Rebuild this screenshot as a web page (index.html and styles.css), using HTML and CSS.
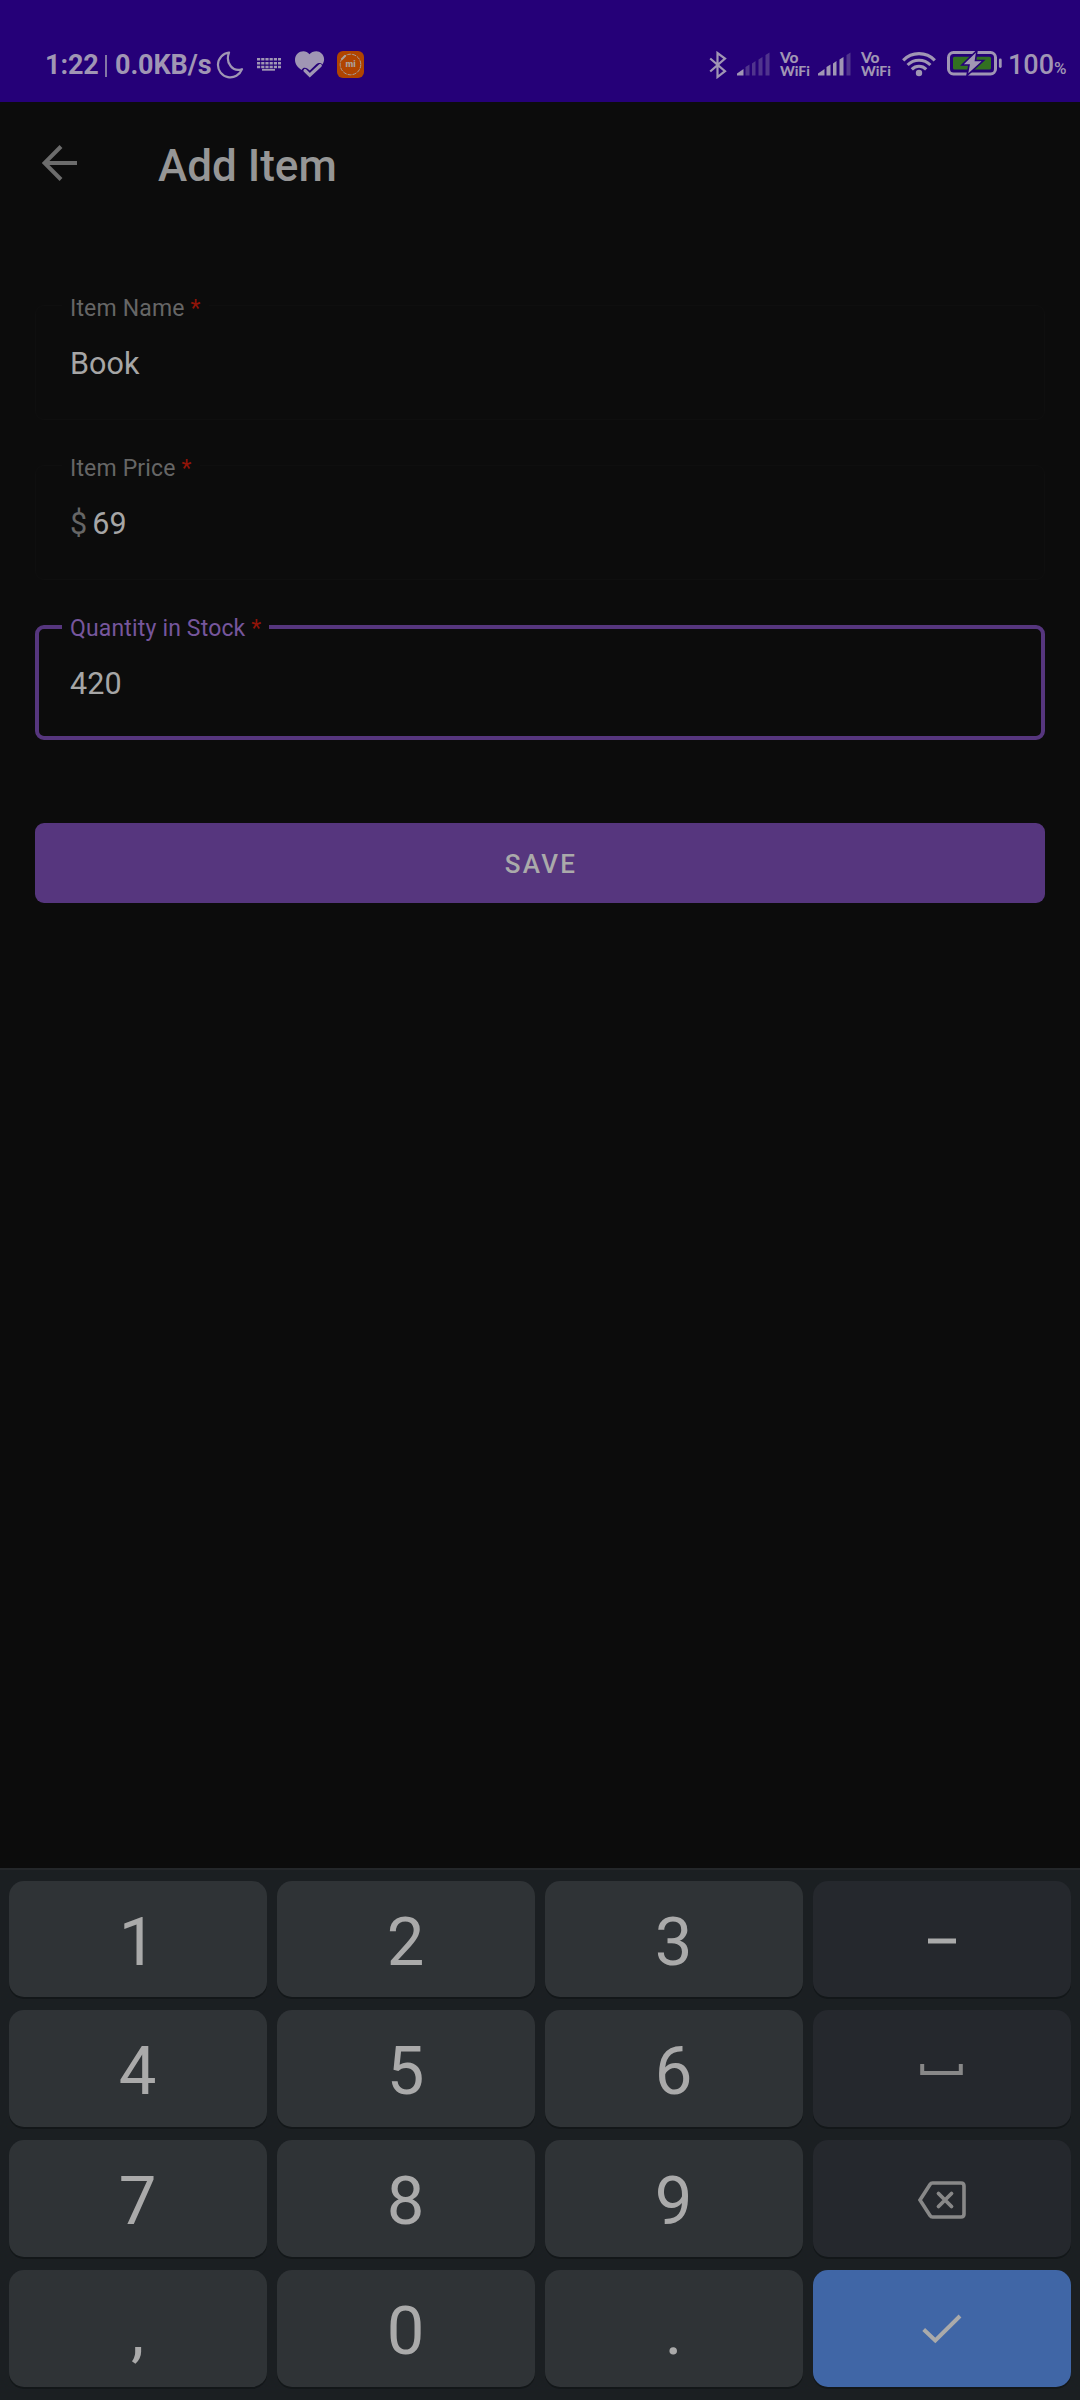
FILE: index.html
```html
<!DOCTYPE html>
<html lang="en">
<head>
<meta charset="utf-8">
<title>Add Item</title>
<link rel="stylesheet" href="styles.css">
</head>
<body>
<div class="screen">
  <header class="status">
    <div class="status-left">
      <span class="clock">1:22</span>
      <span class="divider"></span>
      <span class="speed">0.0KB/s</span>
      <svg class="moon" width="28" height="28" viewBox="0 0 28 28"><path d="M13 1.600A12.400 12.400 0 1 0 26 18.200C17 21.500 9 12 13 1.600Z" fill="none" stroke="currentColor" stroke-width="2.200" stroke-linejoin="round"/></svg>
      <svg class="keyboard" width="24" height="13" viewBox="0 0 24 13"><path d="M0 1.300H24M0 5.300H24M0 9H24" stroke="currentColor" stroke-width="2.400" stroke-dasharray="3.200 1"/><path d="M5 11.800H18" stroke="currentColor" stroke-width="1.800"/></svg>
      <svg class="heart" width="30" height="28" viewBox="0 0 30 28"><path d="M14.500 3.200C10-2.500 0 .5 0 9C0 13.500 3 16.500 6.500 19C9 15 12 17 14.800 19.500L21 13.500C24 11 26.500 12 27.500 13.500C32 6 26 .3 21.500 .3C18.500 .3 16 1.500 14.500 3.200Z" fill="currentColor"/><path d="M10 19.500L14.800 24.200L25.300 14.500" fill="none" stroke="currentColor" stroke-width="3.200" stroke-linecap="round"/></svg>
      <svg class="app" width="27" height="27" viewBox="0 0 27 27"><rect width="27" height="27" rx="6" fill="#b04400"/><circle cx="13.500" cy="13.500" r="10.300" fill="none" stroke="#aaa09a" stroke-width="1" stroke-dasharray="4 1"/><path d="M4.500 8.500L8.500 4.500" stroke="#aaa09a" stroke-width="2"/><text class="app-text" x="13.500" y="16" text-anchor="middle" fill="#aaa09a">mi</text></svg>
    </div>
    <div class="status-right">
      <svg class="bluetooth" width="18" height="28" viewBox="0 0 18 28"><path d="M1.200 7.500L16 20.200L8.500 26V2L16 7.500L1.200 20.500" fill="none" stroke="currentColor" stroke-width="2.200"/></svg>
      <svg class="signal" width="33" height="24" viewBox="0 0 33 24"><path d="M0 23.500V21.500L6.500 17V23.500Z" fill="currentColor"/><path class="dim" d="M8.500 23.500V15L12.500 12.500V23.500ZM15 23.500V11.500L18.500 9V23.500ZM21.500 23.500V7.500L25.500 5V23.500ZM28.500 23.500V3L32.500 .500V23.500Z" fill="currentColor"/></svg>
      <span class="vowifi"><span class="vo">Vo</span><span>WiFi</span></span>
      <svg class="signal" width="33" height="24" viewBox="0 0 33 24"><path d="M0 23.500V21.500L6.500 17V23.500ZM8.500 23.500V15L12.500 12.500V23.500ZM15 23.500V11.500L18.500 9V23.500ZM21.500 23.500V7.500L25.500 5V23.500Z" fill="currentColor"/><path class="dim" d="M28.500 23.500V3L32.500 .500V23.500Z" fill="currentColor"/></svg>
      <span class="vowifi"><span class="vo">Vo</span><span>WiFi</span></span>
      <svg class="wifi" width="34" height="26" viewBox="0 0 34 26"><g fill="none" stroke="currentColor" stroke-width="3.100"><path d="M1.200 9.300A22 22 0 0 1 32.800 9.300"/><path d="M5.600 14A16 16 0 0 1 28.400 14"/><path d="M9.800 18.300A10.200 10.200 0 0 1 24.200 18.300"/></g><circle cx="17" cy="22" r="3.200" fill="currentColor"/></svg>
      <svg class="battery" width="56" height="26" viewBox="0 0 56 26"><rect x="1.500" y="2.500" width="47" height="21.500" rx="5" fill="none" stroke="currentColor" stroke-width="3"/><rect x="6" y="6.800" width="38" height="12.700" rx="1.500" fill="#327022"/><path d="M30 .5L15 15H22L20 25.500L36.500 10.500H28.500Z" fill="currentColor" stroke="#250078" stroke-width="1.600"/><path d="M53.300 10V16.500" stroke="currentColor" stroke-width="2.800" stroke-linecap="round"/></svg>
      <span class="percent">100<small>%</small></span>
    </div>
  </header>

  <nav class="appbar">
    <svg class="back" width="36" height="37" viewBox="0 0 36 37"><path d="M19 1.500L2.500 18L19 34.500M2.500 18H35" fill="none" stroke="currentColor" stroke-width="4"/></svg>
    <h1 class="title">Add Item</h1>
  </nav>

  <main class="form">
    <div class="field"><label class="label">Item Name <b class="star">*</b></label><span class="value">Book</span></div>
    <div class="field"><label class="label">Item Price <b class="star">*</b></label><span class="prefix">$</span><span class="value">69</span></div>
    <div class="field active"><label class="label">Quantity in Stock <b class="star">*</b></label><span class="value">420</span></div>
    <button class="save">SAVE</button>
  </main>

  <section class="keypad">
    <div class="key">1</div><div class="key">2</div><div class="key">3</div>
    <div class="key side"><svg width="28" height="6" viewBox="0 0 28 6"><path d="M0 3H28" stroke="#aaa" stroke-width="5"/></svg></div>
    <div class="key">4</div><div class="key">5</div><div class="key">6</div>
    <div class="key side"><svg width="43" height="12" viewBox="0 0 43 12"><path d="M2.200 0V9H40.800V0" fill="none" stroke="#888" stroke-width="4"/></svg></div>
    <div class="key">7</div><div class="key">8</div><div class="key">9</div>
    <div class="key side"><svg width="48" height="38" viewBox="0 0 48 38"><path d="M14.500 2H43Q46 2 46 5V33Q46 36 43 36H14.500Q13 36 12 34.500L2 19L12 3.500Q13 2 14.500 2Z" fill="none" stroke="#888" stroke-width="3.600"/><path d="M20.500 12.500L33.500 25.500M33.500 12.500L20.500 25.500" stroke="#888" stroke-width="3.800" stroke-linecap="round"/></svg></div>
    <div class="key">,</div><div class="key">0</div><div class="key">.</div>
    <div class="key enter"><svg width="40" height="30" viewBox="0 0 40 30"><path d="M1.700 15.500L13.300 26.500L38 2" fill="none" stroke="#aaa" stroke-width="4"/></svg></div>
  </section>
</div>
</body>
</html>
```
FILE: styles.css
```css
* { box-sizing: border-box; }
body { margin: 0; background: #0c0c0c; font-family: Roboto, sans-serif; }
svg { display: block; flex: none; }
.screen { display: flex; flex-direction: column; width: 1080px; height: 2400px; background: #0c0c0c; }

.status { display: flex; justify-content: space-between; height: 102px; padding: 51px 14px 0 45px; background: #250078; color: #a096b4; }
.status-left, .status-right { display: flex; align-items: flex-start; }
.clock, .speed { font-size: 27px; line-height: 29px; font-weight: 700; letter-spacing: -.1px; white-space: nowrap; }
.clock { width: 60px; }
.divider { width: 2px; height: 22px; margin-top: 4px; background: #8377a5; }
.speed { width: 103px; padding-left: 8px; }
.moon { margin-left: 6px; }
.keyboard { margin: 7px 0 0 13px; }
.heart { margin-left: 14px; }
.app { margin-left: 12px; }
.app-text { font-family: Roboto, sans-serif; font-size: 9px; font-weight: 900; }
.signal { margin: 1px 0 0 10px; }
.dim { opacity: .35; }
.vowifi { display: flex; flex-direction: column; width: 31px; margin-left: 10px; font: 900 14px/14px Lato, sans-serif; }
.vo { font-size: 15.500px; line-height: 13px; }
.vowifi + .signal { margin-left: 7px; }
.wifi { margin-left: 10px; }
.battery { margin: -1px 0 0 11px; }
.percent { width: 58px; margin-left: 5px; font-size: 27px; line-height: 29px; font-weight: 500; white-space: nowrap; }
.percent small { font-size: 17px; }

.appbar { display: flex; align-items: flex-start; height: 203px; padding: 43px 0 0 42px; }
.back { color: #6c6c6c; }
.title { margin: -5px 0 0 80px; color: #969696; font-size: 44px; line-height: 52px; font-weight: 500; }

.form { display: flex; flex-direction: column; flex: 1; padding: 0 35px; }
.field { position: relative; display: flex; align-items: center; height: 115px; margin-bottom: 45px; padding: 3px 34px 0; border: 1px solid #0f0f0f; border-radius: 9px; color: #a6a6a6; font-size: 30.500px; line-height: 36px; }
.label { position: absolute; top: -11px; left: 26px; padding: 0 8px; background: #0c0c0c; color: #666; font-size: 23px; line-height: 28px; letter-spacing: .16px; white-space: nowrap; }
.star { color: #901408; font-weight: 400; }
.value { letter-spacing: .1px; }
.prefix { margin-right: 5px; color: #666; }
.active { border: 4px solid #56367e; padding: 3px 31px 0; }
.active .label { top: -14px; left: 23px; color: #76569c; }
.save { height: 80px; margin-top: 38px; padding: 2px 0 0 2px; border: 0; border-radius: 9px; background: #56367e; color: #aaa; font: 500 26px/32px Roboto, sans-serif; letter-spacing: 2.300px; }

.keypad { display: grid; grid-template-columns: repeat(4, 1fr); grid-template-rows: 116px 117px 117px 117px; gap: 13px 10px; height: 532px; padding: 11px 9px 13px; border-top: 2px solid #24272a; background: #1b1f22; }
.key { display: flex; align-items: center; justify-content: center; padding: 5px 1px 0 0; border-radius: 15px; background: #2f3336; box-shadow: 0 2px 0 #131719; color: #aaa; font-size: 67px; line-height: 78px; }
.side { padding: 3px 1px 0 0; background: #25282d; }
.enter { padding: 0 1px 0 0; background: #4066a6; }
```
